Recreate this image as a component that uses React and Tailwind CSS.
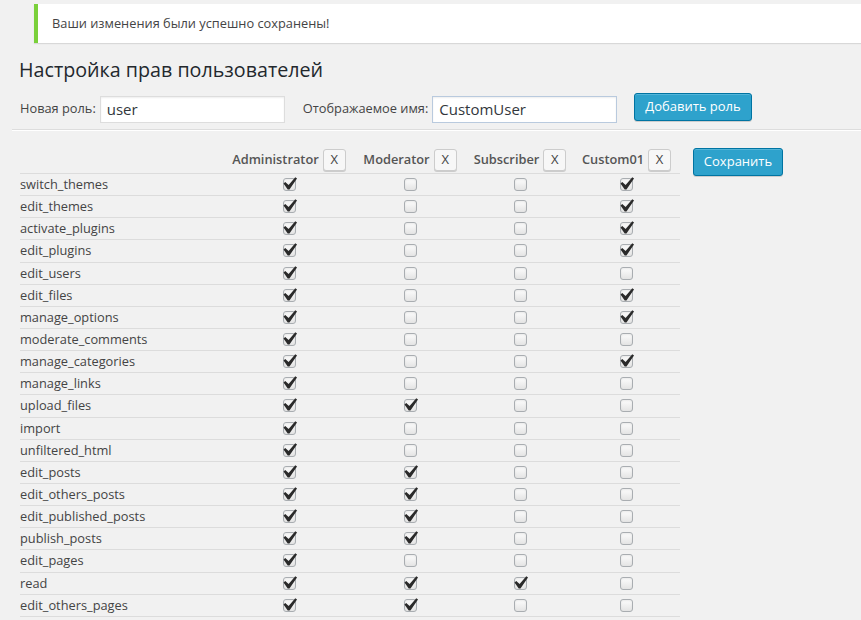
import React from "react";

const roles = ["Administrator", "Moderator", "Subscriber", "Custom01"];
const colW = ["w-[128px]", "w-[114px]", "w-[106px]", "w-[107px]"];

// A = admin, M = moderator, S = subscriber, C = custom01
const caps = [
  ["switch_themes", 1, 0, 0, 1],
  ["edit_themes", 1, 0, 0, 1],
  ["activate_plugins", 1, 0, 0, 1],
  ["edit_plugins", 1, 0, 0, 1],
  ["edit_users", 1, 0, 0, 0],
  ["edit_files", 1, 0, 0, 1],
  ["manage_options", 1, 0, 0, 1],
  ["moderate_comments", 1, 0, 0, 0],
  ["manage_categories", 1, 0, 0, 1],
  ["manage_links", 1, 0, 0, 0],
  ["upload_files", 1, 1, 0, 0],
  ["import", 1, 0, 0, 0],
  ["unfiltered_html", 1, 0, 0, 0],
  ["edit_posts", 1, 1, 0, 0],
  ["edit_others_posts", 1, 1, 0, 0],
  ["edit_published_posts", 1, 1, 0, 0],
  ["publish_posts", 1, 1, 0, 0],
  ["edit_pages", 1, 0, 0, 0],
  ["read", 1, 1, 1, 0],
  ["edit_others_pages", 1, 1, 0, 0],
];

function Checkbox({ checked }) {
  return (
    <span className="relative inline-block w-[13px] h-[13px] rounded-[3px] border border-[#a9adb1] bg-gradient-to-b from-[#fdfdfd] to-[#e4e4e4] shadow-[inset_0_1px_2px_rgba(0,0,0,0.08)]">
      {checked ? (
        <svg
          viewBox="0 0 20 20"
          className="absolute w-[26px] h-[26px] left-[-8px] top-[-8px]"
        >
          <path
            d="M14.83 4.89l1.34.94-5.81 8.38H9.02L5.78 9.67l1.34-1.25 2.57 2.4z"
            fill="#2a2a2a"
          />
        </svg>
      ) : null}
    </span>
  );
}

export default function App() {
  return (
    <div className="min-h-[620px] bg-[#f1f1f1] font-['Open_Sans',sans-serif] text-[12.8px] text-[#444] overflow-hidden">
      <div className="pt-[4px] pl-[34px]">
        <div className="h-[39px] bg-white border-l-4 border-[#7ad03a] shadow-[0_1px_1px_rgba(0,0,0,0.1)] flex items-center pl-[14px]">
          Ваши изменения были успешно сохранены!
        </div>
      </div>

      <h1 className="pl-[19px] mt-[12px] text-[19.7px] leading-[29px] text-[#23282d]">
        Настройка прав пользователей
      </h1>

      <div className="flex items-center pl-[20px] mt-[10px] h-[30px]">
        <span>Новая роль:</span>
        <div className="ml-[4px] w-[185px] h-[27px] bg-white border border-[#ddd] shadow-[inset_0_1px_2px_rgba(0,0,0,0.07)] flex items-center px-[6px] text-[15px] text-[#32373c]">
          user
        </div>
        <span className="ml-[18px]">Отображаемое имя:</span>
        <div className="ml-[4px] w-[185px] h-[27px] bg-white border border-[#b9cade] shadow-[inset_0_1px_2px_rgba(0,0,0,0.07)] flex items-center px-[6px] text-[15px] text-[#32373c]">
          CustomUser
        </div>
        <button className="ml-[17px] h-[28px] px-[10px] rounded-[3px] bg-[#2ea2cc] border border-[#0074a2] text-white text-[13px] shadow-[inset_0_1px_0_rgba(120,200,230,0.5),0_1px_0_rgba(0,0,0,0.15)] -mt-[4px]">
          Добавить роль
        </button>
      </div>

      <div className="ml-[12px] mt-[5px] border-t border-[#ddd] border-b border-b-white" />

      <div className="flex items-start pl-[20px] mt-[17px]">
        <div className="w-[660px]">
          <div className="flex items-center h-[26px] border-b border-[#dcdcdc] pb-[2px]">
            <div className="w-[205px]" />
            {roles.map((r, i) => (
              <div
                key={r}
                className={`${colW[i]} flex items-center justify-center gap-[4px]`}
              >
                <span className="font-semibold text-[#555]">{r}</span>
                <span className="w-[23px] h-[22px] rounded-[3px] border border-[#ccc] bg-[#f7f7f7] shadow-[0_1px_0_#ccc] flex items-center justify-center text-[13px] text-[#444]">
                  X
                </span>
              </div>
            ))}
          </div>
          {caps.map((row) => (
            <div
              key={row[0]}
              className="flex items-center h-[22.15px] border-b border-[#dcdcdc]"
            >
              <div className="w-[205px]">{row[0]}</div>
              {row.slice(1).map((c, i) => (
                <div key={i} className={`${colW[i]} flex justify-center`}>
                  <Checkbox checked={c === 1} />
                </div>
              ))}
            </div>
          ))}
        </div>
        <button className="ml-[13px] h-[28px] w-[90px] rounded-[3px] bg-[#2ea2cc] border border-[#0074a2] text-white text-[13px] shadow-[inset_0_1px_0_rgba(120,200,230,0.5),0_1px_0_rgba(0,0,0,0.15)]">
          Сохранить
        </button>
      </div>
    </div>
  );
}
